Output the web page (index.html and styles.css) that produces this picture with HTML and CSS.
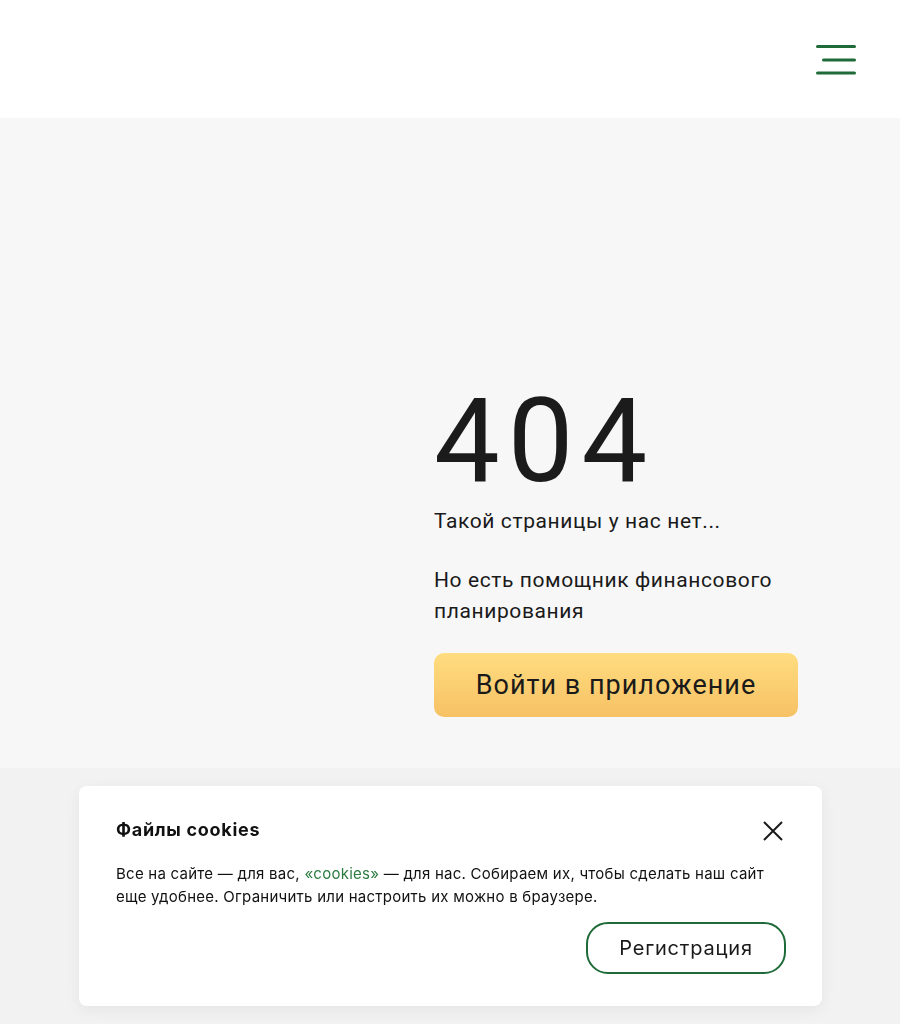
FILE: index.html
```html
<!DOCTYPE html>
<html lang="ru">
<head>
<meta charset="utf-8">
<title>404</title>
<link rel="stylesheet" href="styles.css">
</head>
<body>
<header class="header">
  <button class="burger" aria-label="Меню">
    <svg width="40" height="30" viewBox="0 0 40 30">
      <line x1="1.5" y1="1.5" x2="38.5" y2="1.5" stroke="#1e6b39" stroke-width="3" stroke-linecap="round"/>
      <line x1="7.5" y1="15" x2="38.5" y2="15" stroke="#1e6b39" stroke-width="3" stroke-linecap="round"/>
      <line x1="1.5" y1="28" x2="38.5" y2="28" stroke="#1e6b39" stroke-width="3" stroke-linecap="round"/>
    </svg>
  </button>
</header>
<main class="main">
  <div class="error-grid">
    <div class="error-art"></div>
    <div class="error-content">
      <h1 class="error-code">404</h1>
      <p class="error-lead">Такой страницы у нас нет...</p>
      <p class="error-text">Но есть помощник финансового планирования</p>
      <a class="btn-primary" href="#">Войти в приложение</a>
    </div>
  </div>
</main>
<footer class="footer"></footer>
<div class="cookie">
  <div class="cookie-head">
    <h2 class="cookie-title">Файлы cookies</h2>
    <button class="cookie-close" aria-label="Закрыть">
      <svg width="22" height="22" viewBox="0 0 22 22">
        <path d="M2 2 L20 20 M20 2 L2 20" stroke="#1a1a1a" stroke-width="2" fill="none"/>
      </svg>
    </button>
  </div>
  <p class="cookie-text">Все на сайте — для вас, <a href="#">«cookies»</a> — для нас. Собираем их, чтобы сделать наш сайт еще удобнее. Ограничить или настроить их можно в браузере.</p>
  <div class="cookie-actions">
    <a class="btn-outline" href="#">Регистрация</a>
  </div>
</div>
</body>
</html>
```
FILE: styles.css
```css
* { box-sizing: border-box; }
html, body { margin: 0; padding: 0; }
body {
  font-family: Roboto, "Noto Sans", sans-serif;
  color: #1a1a1a;
  background: #f2f2f2;
  min-height: 1024px;
}
.header {
  height: 118px;
  background: #fff;
  display: flex;
  justify-content: flex-end;
  align-items: flex-start;
  padding: 45px 44px 0 0;
}
.burger {
  border: 0;
  background: none;
  padding: 0;
  width: 40px;
  height: 30px;
  display: block;
}
.burger svg { display: block; }
.main {
  background: #f7f7f7;
  height: 650px;
}
.error-grid {
  display: grid;
  grid-template-columns: 434px 364px;
  padding-top: 265px;
}
.error-code {
  margin: 0;
  font-weight: 400;
  font-size: 117px;
  line-height: 117px;
  letter-spacing: 8px;
  color: #1b1b1b;
}
.error-lead {
  margin: 6px 0 0;
  font-size: 21px;
  line-height: 30px;
  letter-spacing: 0.6px;
}
.error-text {
  margin: 29px 0 0;
  font-size: 21px;
  line-height: 31px;
  letter-spacing: 0.6px;
}
.btn-primary {
  margin-top: 26px;
  display: flex;
  align-items: center;
  justify-content: center;
  height: 64px;
  border-radius: 10px;
  background: linear-gradient(180deg, #ffdd80 0%, #f6c164 100%);
  color: #1a1a1a;
  font-size: 27px;
  letter-spacing: 1px;
  text-decoration: none;
}
.footer {
  height: 256px;
  background: #f2f2f2;
}
.cookie {
  position: fixed;
  left: 79px;
  top: 786px;
  width: 743px;
  height: 220px;
  background: #fff;
  border-radius: 8px;
  box-shadow: 0 4px 16px rgba(0,0,0,0.06);
  padding: 31px 36px 32px 37px;
  font-family: Inter, "Noto Sans", sans-serif;
}
.cookie-head {
  display: flex;
  justify-content: space-between;
  align-items: center;
}
.cookie-title {
  margin: 0;
  font-size: 18px;
  line-height: 26px;
  font-weight: 700;
  letter-spacing: 0.7px;
  color: #111;
}
.cookie-close {
  border: 0;
  background: none;
  padding: 0;
  width: 22px;
  height: 22px;
  margin-right: 2px;
  margin-top: 2px;
}
.cookie-close svg { display: block; }
.cookie-text {
  margin: 19px 0 0;
  font-size: 15px;
  line-height: 23px;
  letter-spacing: 0.25px;
  color: #111;
  max-width: 660px;
}
.cookie-text a {
  color: #2b7b40;
  text-decoration: none;
}
.cookie-actions {
  display: flex;
  justify-content: flex-end;
  margin-top: 14px;
}
.btn-outline {
  display: flex;
  align-items: center;
  justify-content: center;
  width: 200px;
  height: 52px;
  border: 2px solid #1e6b39;
  border-radius: 22px;
  color: #1a1a1a;
  font-size: 20px;
  letter-spacing: 0.8px;
  text-decoration: none;
}
```
